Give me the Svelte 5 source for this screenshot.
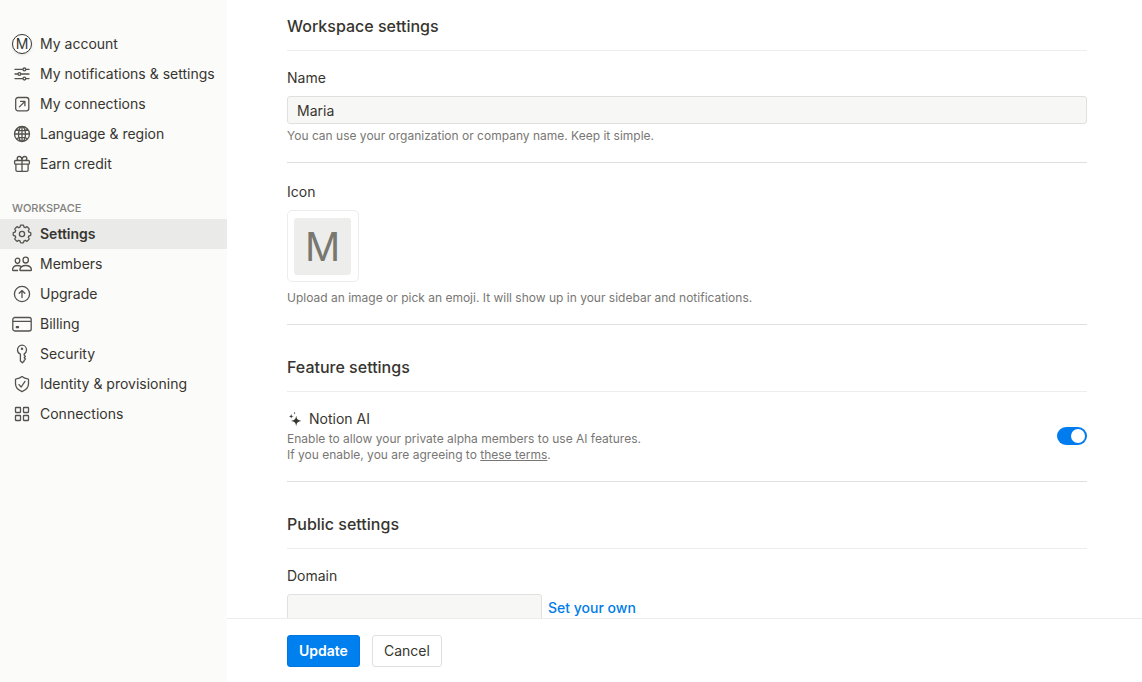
<script>
	// Sidebar icons, drawn on a 20x20 grid
	const icons = {
		sliders:
			'M3 5.4H11M13.8 5.4H17M3 10H6M8.8 10H17M3 14.6H11M13.8 14.6H17M11 5.4a1.4 1.4 0 1 0 2.8 0a1.4 1.4 0 1 0-2.8 0M6 10a1.4 1.4 0 1 0 2.8 0a1.4 1.4 0 1 0-2.8 0M11 14.6a1.4 1.4 0 1 0 2.8 0a1.4 1.4 0 1 0-2.8 0',
		external:
			'M6 3.5H14.5A2.3 2.3 0 0 1 16.8 5.8V14.5A2.3 2.3 0 0 1 14.5 16.8H6A2.3 2.3 0 0 1 3.7 14.5V5.8A2.3 2.3 0 0 1 6 3.5ZM7.4 12.9L12.7 7.6M8.6 7.4H12.9V11.7',
		globe:
			'M2.5 10a7.5 7.5 0 1 0 15 0a7.5 7.5 0 1 0-15 0M6.5 10c0 4.1 1.6 7.5 3.5 7.5s3.5-3.4 3.5-7.5S11.9 2.5 10 2.5S6.5 5.9 6.5 10M10 2.5V17.5M2.5 10H17.5M4.4 5.2C6.9 7.2 13.1 7.2 15.6 5.2M4.4 14.8C6.9 12.8 13.1 12.8 15.6 14.8',
		gift: 'M3.6 6.5H16.4A1 1 0 0 1 17.4 7.5V9.2A.9 .9 0 0 1 16.5 10.1H3.5A.9 .9 0 0 1 2.6 9.2V7.5A1 1 0 0 1 3.6 6.5ZM3.9 10.1V16A1.4 1.4 0 0 0 5.3 17.4H14.7A1.4 1.4 0 0 0 16.1 16V10.1M10 6.5V17.4M10 6.5C9.9 3.9 8.8 2.5 7.3 2.5C5.9 2.5 5.2 3.5 5.2 4.5C5.2 5.5 5.9 6.5 7.2 6.5M10 6.5C10.1 3.9 11.2 2.5 12.7 2.5C14.1 2.5 14.8 3.5 14.8 4.5C14.8 5.5 14.1 6.5 12.8 6.5',
		gear: 'M8.9 1.2H11.1Q11.6 1.2 11.7 1.8L12 3.2Q12.7 3.4 13.3 3.7L14.5 2.9Q15 2.6 15.4 3L17 4.6Q17.4 5 17.1 5.5L16.3 6.7Q16.6 7.3 16.8 8L18.2 8.3Q18.8 8.4 18.8 8.9V11.1Q18.8 11.6 18.2 11.7L16.8 12Q16.6 12.7 16.3 13.3L17.1 14.5Q17.4 15 17 15.4L15.4 17Q15 17.4 14.5 17.1L13.3 16.3Q12.7 16.6 12 16.8L11.7 18.2Q11.6 18.8 11.1 18.8H8.9Q8.4 18.8 8.3 18.2L8 16.8Q7.3 16.6 6.7 16.3L5.5 17.1Q5 17.4 4.6 17L3 15.4Q2.6 15 2.9 14.5L3.7 13.3Q3.4 12.7 3.2 12L1.8 11.7Q1.2 11.6 1.2 11.1V8.9Q1.2 8.4 1.8 8.3L3.2 8Q3.4 7.3 3.7 6.7L2.9 5.5Q2.6 5 3 4.6L4.6 3Q5 2.6 5.5 2.9L6.7 3.7Q7.3 3.4 8 3.2L8.3 1.8Q8.4 1.2 8.9 1.2ZM7.4 10a2.6 2.6 0 1 0 5.2 0a2.6 2.6 0 1 0-5.2 0',
		members:
			'M11 5.9C11 4.3 12.2 3.2 13.7 3.2S16.4 4.3 16.4 5.9S15.2 9 13.7 9S11 7.5 11 5.9M8.6 16.5H18.8Q19.6 16.5 19.5 15.6C19.1 12.9 16.7 11.5 13.7 11.5S8.3 12.9 7.9 15.6Q7.8 16.5 8.6 16.5M3.2 6.6C3.2 5.2 4.2 4.2 5.5 4.2S7.8 5.2 7.8 6.6S6.8 9.3 5.5 9.3S3.2 8 3.2 6.6M8.5 12.2C7.7 11.8 6.7 11.5 5.5 11.5C2.9 11.5 .9 13 .5 15.5Q.4 16.5 1.2 16.5H5.6',
		upgrade:
			'M2.4 10a7.6 7.6 0 1 0 15.2 0a7.6 7.6 0 1 0-15.2 0M10 13.6V6.5M7.2 9.3L10 6.5L12.8 9.3',
		card: 'M2.8 3.5H17.2A2 2 0 0 1 19.2 5.5V15A2 2 0 0 1 17.2 17H2.8A2 2 0 0 1 .8 15V5.5A2 2 0 0 1 2.8 3.5ZM1 7.4H19M4.4 12.6H6.4V13.7H4.4ZM4.4 13.2H6.4',
		key: 'M8.4 10.2C6.6 9.5 5.5 8 5.5 6C5.5 3.3 7.5 1.2 10 1.2S14.5 3.3 14.5 6C14.5 7.8 13.6 9.2 12.2 9.9V11.2L13.4 12.4L12.2 13.7L13.4 15L12.2 16.3V17L10.4 18.8L8.4 17ZM9.4 4.8a.6 .6 0 1 0 1.2 0a.6 .6 0 1 0-1.2 0',
		shield:
			'M10 2.6C11.6 3.9 13.7 4.7 15.8 4.8Q16.5 4.9 16.5 5.6V9.8C16.5 13.9 13.8 16.1 10 17.6C6.2 16.1 3.5 13.9 3.5 9.8V5.6Q3.5 4.9 4.2 4.8C6.3 4.7 8.4 3.9 10 2.6ZM7 10.6L9.2 13L13 7.4',
		grid: 'M4 3.5H8Q8.5 3.5 8.5 4V8Q8.5 8.5 8 8.5H4Q3.5 8.5 3.5 8V4Q3.5 3.5 4 3.5ZM12 3.5H16Q16.5 3.5 16.5 4V8Q16.5 8.5 16 8.5H12Q11.5 8.5 11.5 8V4Q11.5 3.5 12 3.5ZM4 11.5H8Q8.5 11.5 8.5 12V16Q8.5 16.5 8 16.5H4Q3.5 16.5 3.5 16V12Q3.5 11.5 4 11.5ZM12 11.5H16Q16.5 11.5 16.5 12V16Q16.5 16.5 16 16.5H12Q11.5 16.5 11.5 16V12Q11.5 11.5 12 11.5Z'
	};

	const accountItems = [
		{ id: 'account', label: 'My account' },
		{ id: 'notifications', label: 'My notifications & settings', icon: 'sliders' },
		{ id: 'my-connections', label: 'My connections', icon: 'external' },
		{ id: 'language', label: 'Language & region', icon: 'globe' },
		{ id: 'credit', label: 'Earn credit', icon: 'gift' }
	];

	const workspaceItems = [
		{ id: 'settings', label: 'Settings', icon: 'gear' },
		{ id: 'members', label: 'Members', icon: 'members' },
		{ id: 'upgrade', label: 'Upgrade', icon: 'upgrade' },
		{ id: 'billing', label: 'Billing', icon: 'card' },
		{ id: 'security', label: 'Security', icon: 'key' },
		{ id: 'identity', label: 'Identity & provisioning', icon: 'shield' },
		{ id: 'connections', label: 'Connections', icon: 'grid' }
	];

	const groups = [{ items: accountItems }, { title: 'Workspace', items: workspaceItems }];

	// State
	let active = 'settings';
	let name = 'Maria';
	let domain = '';
	let aiEnabled = true;

	// Reset the form to the saved values
	function cancel() {
		name = 'Maria';
		domain = '';
		aiEnabled = true;
	}
</script>

<div class="settings">
	<nav class="sidebar">
		{#each groups as group}
			<div class="group">
				{#if group.title}
					<h3 class="group-title">{group.title}</h3>
				{/if}
				{#each group.items as item}
					<button
						type="button"
						class="nav-item"
						class:active={active === item.id}
						on:click={() => (active = item.id)}
					>
						{#if item.icon}
							<svg class="nav-icon" viewBox="0 0 20 20" aria-hidden="true">
								<path d={icons[item.icon]} />
							</svg>
						{:else}
							<span class="avatar">M</span>
						{/if}
						<span>{item.label}</span>
					</button>
				{/each}
			</div>
		{/each}
	</nav>

	<form class="main" on:submit|preventDefault>
		<div class="content">
			<section>
				<h2>Workspace settings</h2>
				<div class="field">
					<label class="label" for="name">Name</label>
					<input id="name" class="input" type="text" bind:value={name} />
					<p class="hint">You can use your organization or company name. Keep it simple.</p>
				</div>
				<div class="field">
					<span class="label">Icon</span>
					<button type="button" class="icon-picker" aria-label="Workspace icon">
						<span class="icon-letter">M</span>
					</button>
					<p class="hint icon-hint">
						Upload an image or pick an emoji. It will show up in your sidebar and notifications.
					</p>
				</div>
			</section>

			<section>
				<h2>Feature settings</h2>
				<div class="field toggle-field">
					<div>
						<label class="ai-label" for="notion-ai">
							<svg class="sparkle" viewBox="0 0 16 16" aria-hidden="true">
								<path
									d="M9.2 4.6C9.7 8.4 10.6 9.3 14.4 9.9C10.6 10.5 9.7 11.4 9.2 15.2C8.7 11.4 7.8 10.5 4 9.9C7.8 9.3 8.7 8.4 9.2 4.6Z"
								/>
								<path
									d="M4.2 2.7C4.4 4.6 4.8 5 6.7 5.3C4.8 5.6 4.4 6 4.2 7.9C4 6 3.6 5.6 1.7 5.3C3.6 5 4 4.6 4.2 2.7Z"
								/>
								<path
									d="M7.6 .5C7.7 1.7 8 2 9.2 2.1C8 2.2 7.7 2.5 7.6 3.7C7.5 2.5 7.2 2.2 6 2.1C7.2 2 7.5 1.7 7.6 .5Z"
								/>
							</svg>
							Notion AI
						</label>
						<p class="hint ai-hint">
							Enable to allow your private alpha members to use AI features.<br />
							If you enable, you are agreeing to <a href="#terms">these terms</a>.
						</p>
					</div>
					<input id="notion-ai" class="toggle" type="checkbox" bind:checked={aiEnabled} />
				</div>
			</section>

			<section>
				<h2>Public settings</h2>
				<div class="field">
					<label class="label" for="domain">Domain</label>
					<div class="domain-row">
						<input id="domain" class="input domain" type="text" bind:value={domain} />
						<a class="own-link" href="#domain">Set your own</a>
					</div>
				</div>
			</section>
		</div>

		<footer class="footer">
			<button type="submit" class="button primary">Update</button>
			<button type="button" class="button" on:click={cancel}>Cancel</button>
		</footer>
	</form>
</div>

<style>
	:global(body) {
		margin: 0;
		background: #fff;
	}

	.settings {
		display: flex;
		height: 100vh;
		overflow: hidden;
		font-family: Inter, 'Liberation Sans', sans-serif;
		font-size: 14px;
		line-height: 20px;
		color: #37352f;
	}

	button,
	input {
		box-sizing: border-box;
		font: inherit;
		color: inherit;
	}

	button {
		cursor: pointer;
	}

	.sidebar {
		flex: none;
		box-sizing: border-box;
		width: 227px;
		padding-top: 29px;
		background: #fbfbfa;
		overflow: hidden;
	}

	.group {
		margin-bottom: 20px;
	}

	.group-title {
		margin: 0;
		padding: 0 12px 2px;
		font-size: 11px;
		font-weight: 500;
		line-height: 18px;
		text-transform: uppercase;
		color: #82817d;
	}

	.nav-item {
		display: flex;
		align-items: center;
		gap: 8px;
		width: 100%;
		height: 30px;
		padding: 0 12px;
		border: none;
		background: none;
		text-align: left;
		white-space: nowrap;
	}

	.nav-item.active {
		background: #eaeae9;
		font-weight: 600;
	}

	.nav-icon {
		flex: none;
		width: 20px;
		height: 20px;
		fill: none;
		stroke: #54524c;
		stroke-width: 1.3;
		stroke-linecap: round;
		stroke-linejoin: round;
	}

	.avatar {
		flex: none;
		box-sizing: border-box;
		width: 20px;
		height: 20px;
		border: 1px solid #37352f;
		border-radius: 50%;
		background: #fff;
		box-shadow: 0 1px 3px rgba(15, 15, 15, 0.12);
		line-height: 18px;
		text-align: center;
	}

	.main {
		display: flex;
		flex: 1;
		flex-direction: column;
		min-width: 0;
	}

	.content {
		flex: 1;
		min-height: 0;
		padding: 16px 55px 0 60px;
		overflow: hidden;
	}

	section {
		margin-bottom: 32px;
	}

	h2 {
		margin: 0;
		padding-bottom: 14px;
		border-bottom: 1px solid #ededec;
		font-size: 16px;
		font-weight: 500;
		line-height: 20px;
	}

	.field {
		padding: 17px 0 18px;
		border-bottom: 1px solid #dfdfde;
	}

	.field + .field {
		padding-top: 19px;
	}

	.label {
		display: block;
		margin-bottom: 8px;
	}

	.input {
		display: block;
		width: 100%;
		height: 28px;
		padding: 0 9px;
		border: 1px solid #e0e0de;
		border-radius: 3px;
		background: #f7f7f5;
	}

	.hint {
		margin: 4px 0 0;
		font-size: 12px;
		line-height: 16px;
		color: #787774;
	}

	.icon-hint {
		margin-top: 8px;
	}

	.hint a {
		color: inherit;
	}

	.icon-picker {
		display: flex;
		width: 72px;
		height: 72px;
		padding: 7px 6px;
		border: 1px solid #ededec;
		border-radius: 5px;
		background: #fff;
	}

	.icon-letter {
		width: 57px;
		height: 57px;
		border-radius: 3px;
		background: #ededeb;
		color: #787770;
		font-size: 39px;
		line-height: 57px;
		text-align: center;
	}

	.toggle-field {
		display: flex;
		align-items: center;
		justify-content: space-between;
	}

	.ai-label {
		display: flex;
		align-items: center;
		gap: 6px;
	}

	.sparkle {
		width: 16px;
		height: 16px;
		fill: #37352f;
	}

	.ai-hint {
		margin-top: 2px;
	}

	.toggle {
		display: flex;
		flex: none;
		align-items: center;
		width: 30px;
		height: 18px;
		margin: 0;
		padding: 2px;
		border-radius: 9px;
		background: #d3d2d0;
		appearance: none;
		cursor: pointer;
	}

	.toggle::before {
		content: '';
		width: 14px;
		height: 14px;
		border-radius: 50%;
		background: #fff;
	}

	.toggle:checked {
		justify-content: flex-end;
		background: #007cee;
	}

	.domain-row {
		display: flex;
		align-items: center;
		gap: 6px;
	}

	.domain {
		width: 255px;
	}

	.own-link {
		color: #007cea;
		font-weight: 500;
		text-decoration: none;
	}

	.footer {
		display: flex;
		flex: none;
		gap: 12px;
		padding: 16px 60px 15px;
		border-top: 1px solid #ededec;
	}

	.button {
		height: 32px;
		padding: 0 11px;
		border: 1px solid #dfdfde;
		border-radius: 3px;
		background: #fff;
	}

	.button.primary {
		border-color: #0077e0;
		background: #007fee;
		color: #fff;
		font-weight: 600;
	}
</style>
